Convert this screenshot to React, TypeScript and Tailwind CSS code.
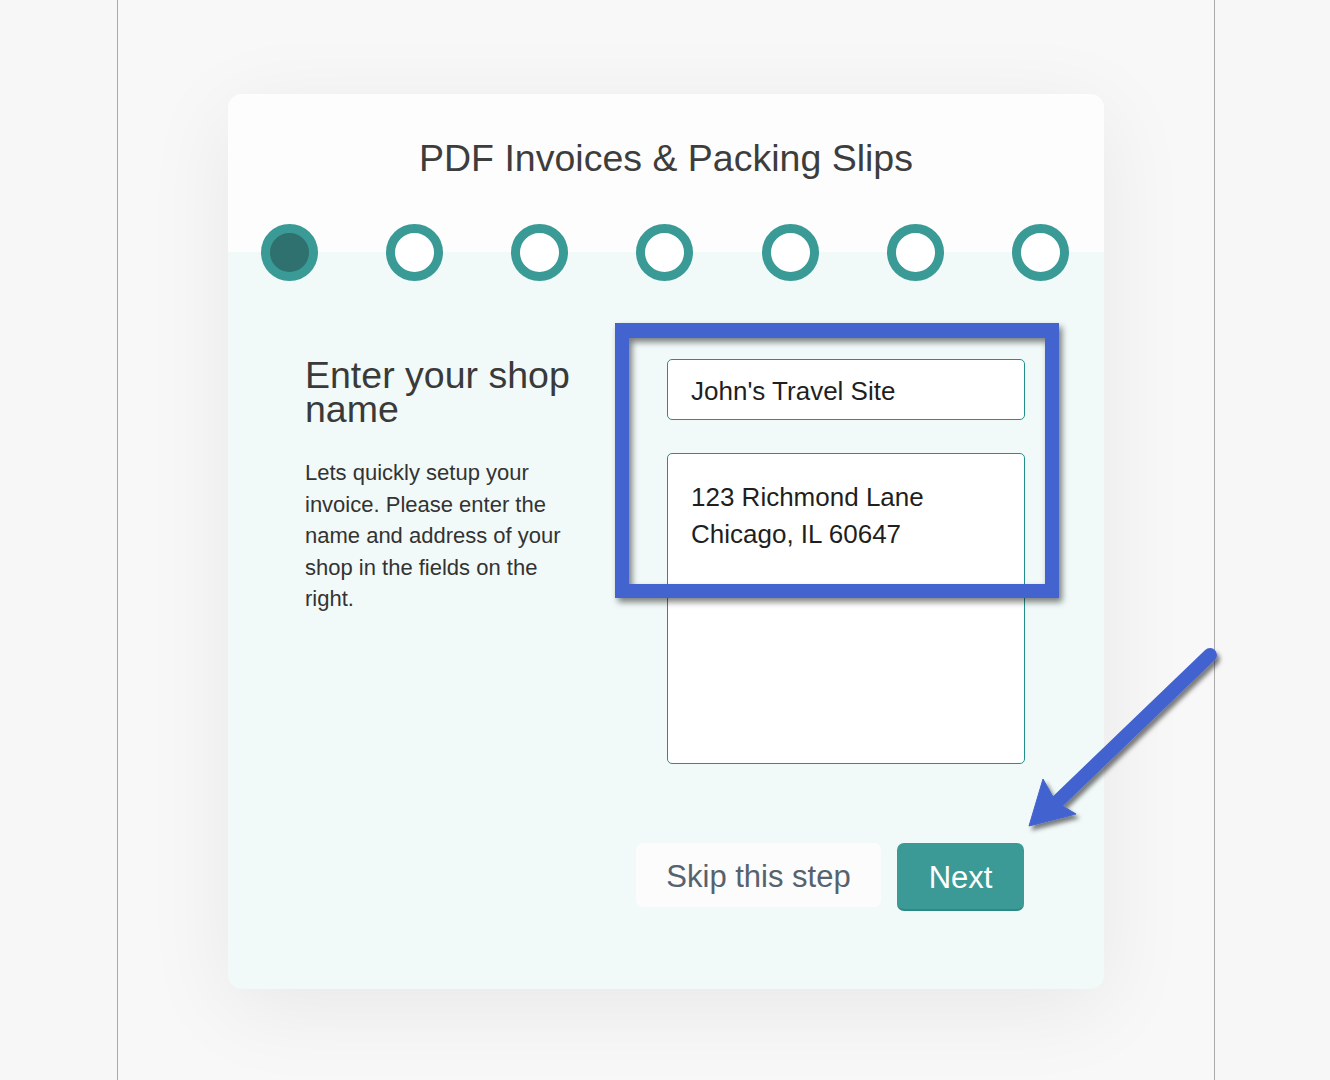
import React from "react";

const steps = [0, 1, 2, 3, 4, 5, 6];

const StepDot = ({ active }: { active: boolean }) => (
  <div
    className={
      active
        ? "w-[57px] h-[57px] rounded-full border-[9px] border-[#3a9a96] bg-[#2e716f]"
        : "w-[57px] h-[57px] rounded-full border-[9px] border-[#3a9a96] bg-white"
    }
  />
);

export default function App() {
  return (
    <div className="h-[1080px] w-[1330px] overflow-hidden bg-[#f7f7f7] font-['Liberation_Sans',Arial,sans-serif]">
      <div className="ml-[117px] w-[1098px] h-full border-x border-[#ababab] bg-[#f8f8f8] pt-[94px]">
        {/* wizard card */}
        <div className="relative mx-auto w-[876px] rounded-[14px] bg-[#f1faf9] shadow-[0_18px_90px_rgba(0,0,0,0.07)]">
          <div className="rounded-t-[14px] bg-[#fdfdfd] pt-[44px] pb-[46px]">
            <h1 className="text-center text-[37.5px] leading-[40px] text-[#3d3d3d]">
              PDF Invoices &amp; Packing Slips
            </h1>
          </div>

          <div className="flex justify-between pl-[33px] pr-[35px] bg-[linear-gradient(to_bottom,#fdfdfd_50%,#f1faf9_50%)]">
            {steps.map((s) => (
              <StepDot key={s} active={s === 0} />
            ))}
          </div>

          <div className="flex justify-between pl-[77px] pr-[79px] mt-[77px]">
            <div className="w-[275px]">
              <h2 className="text-[37.5px] leading-[34px] text-[#3a3a3a]">
                Enter your shop name
              </h2>
              <p className="mt-[31px] text-[22px] leading-[31.5px] text-[#333]">
                Lets quickly setup your invoice. Please enter the name and address of your shop in the fields on the right.
              </p>
            </div>

            <div className="w-[358px] pt-px">
              <div className="h-[61px] flex items-center rounded-[5px] border border-[#23908b] bg-white px-[23px] pt-[3px] text-[26px] text-[#1f1f1f]">
                John's Travel Site
              </div>
              <div className="mt-[33px] h-[311px] rounded-[5px] border border-[#23908b] bg-white px-[23px] pt-[25px] text-[26px] leading-[37px] text-[#1f1f1f]">
                123 Richmond Lane
                <br />
                Chicago, IL 60647
              </div>
            </div>
          </div>

          <div className="flex justify-end items-start gap-[16px] pr-[80px] mt-[79px] pb-[78px]">
            <button className="h-[64px] w-[245px] rounded-[7px] bg-[#fcfcfc] pt-[4px] text-[31px] text-[#56626e]">
              Skip this step
            </button>
            <button className="h-[68px] w-[127px] rounded-[7px] bg-[#3c9a96] border-b-2 border-[#2c8a86] pt-[4px] text-[31px] text-white">
              Next
            </button>
          </div>

          {/* highlight box drawn over the fields */}
          <div className="absolute left-[387px] top-[229px] w-[444px] h-[275px] border-[14px] border-t-[15px] border-[#4364cf] drop-shadow-[3px_4px_3px_rgba(0,0,0,0.5)]" />

          {/* pointer arrow */}
          <svg
            className="absolute left-[782px] top-[546px] overflow-visible"
            width="220"
            height="200"
            viewBox="0 0 220 200"
          >
            <defs>
              <filter id="arrowShadow" x="-20%" y="-20%" width="140%" height="140%">
                <feDropShadow dx="3" dy="4" stdDeviation="2" floodColor="#000" floodOpacity="0.5" />
              </filter>
            </defs>
            <g filter="url(#arrowShadow)" fill="#4364cf" stroke="#4364cf">
              <line x1="200" y1="15" x2="45" y2="164" strokeWidth="14" strokeLinecap="round" />
              <polygon points="19,186 33,139 46,162 66,174" strokeWidth="1" strokeLinejoin="miter" />
            </g>
          </svg>
        </div>
      </div>
    </div>
  );
}
